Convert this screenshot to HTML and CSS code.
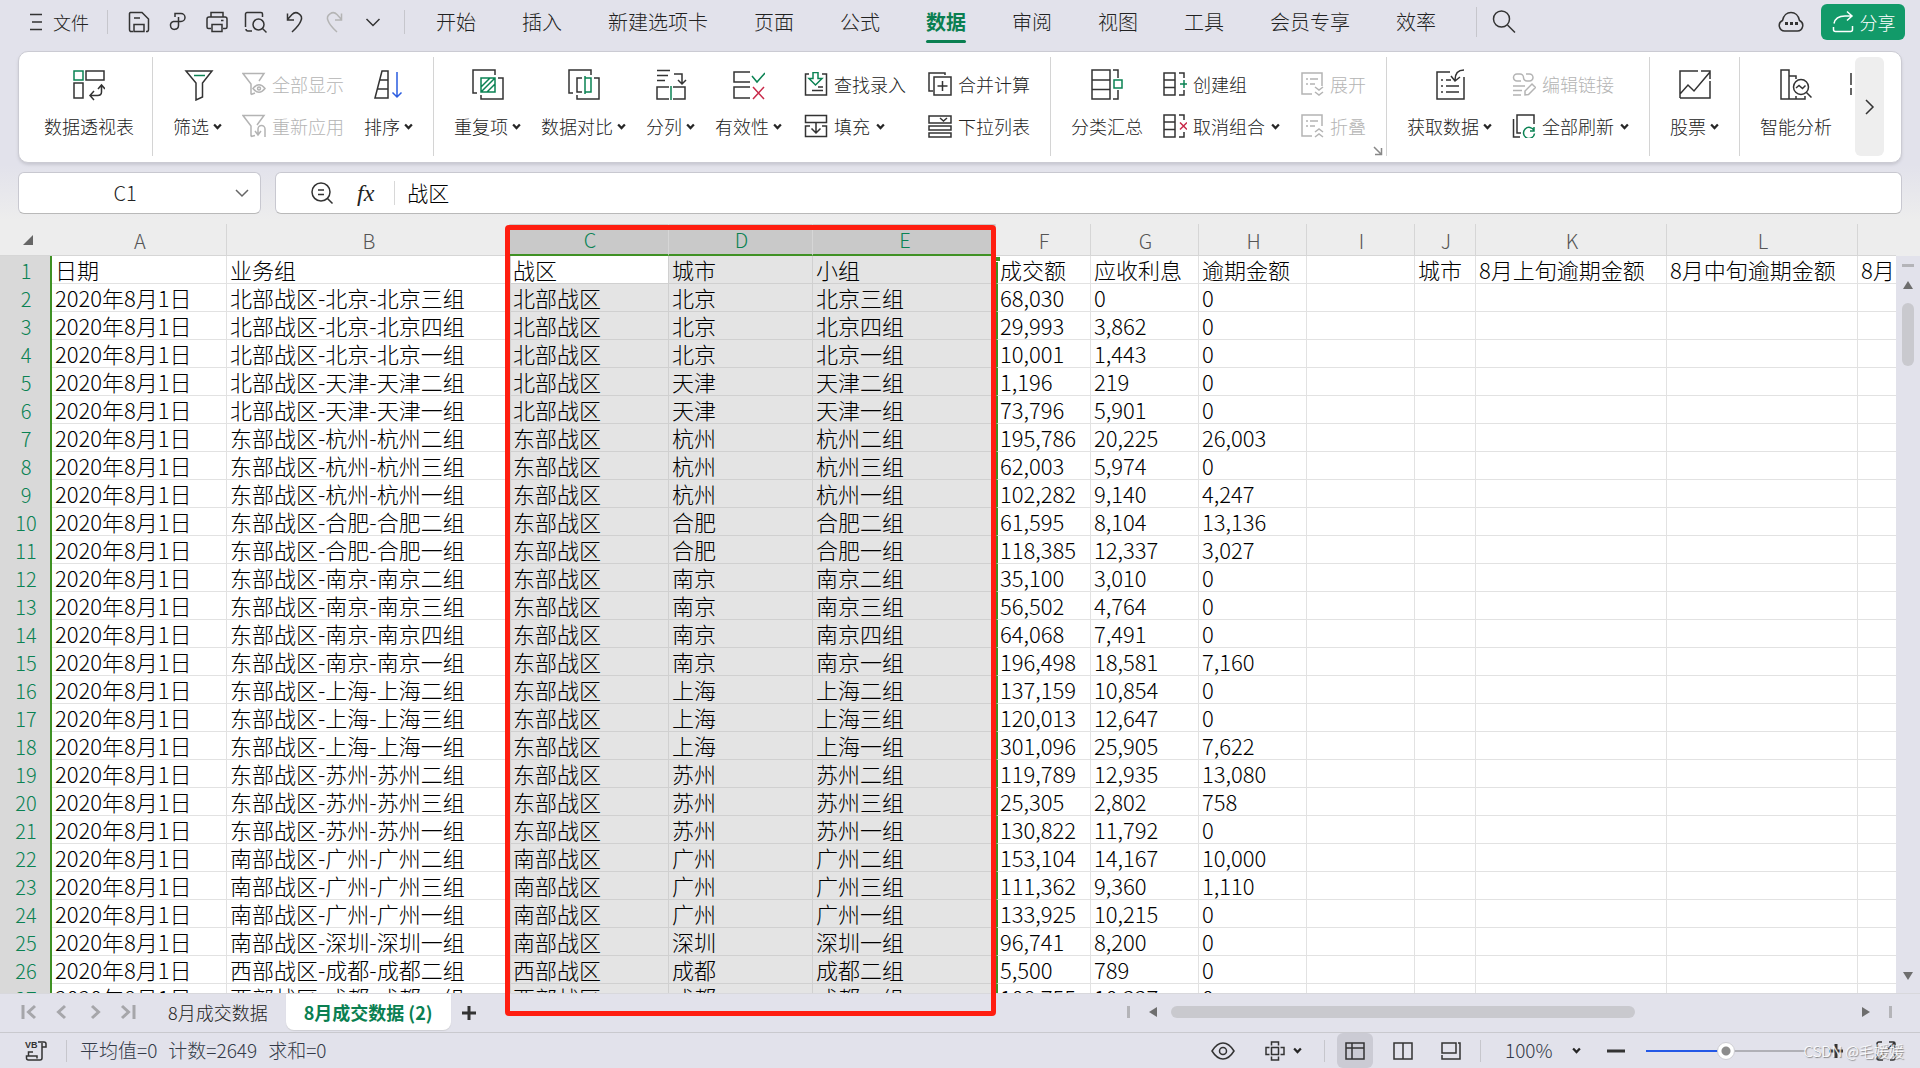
FILE: index.html
```html
<!DOCTYPE html>
<html lang="zh-CN">
<head>
<meta charset="utf-8">
<title>8月成交数据</title>
<link rel="stylesheet" href="styles.css">
</head>
<body>
<svg class="defs" width="0" height="0" aria-hidden="true">
  <symbol id="chev" viewBox="0 0 8 8"><path d="M1 2.200 4 5.400 7 2.200" fill="none" stroke="currentColor" stroke-width="2"/></symbol>
</svg>

<header class="menubar">
  <button class="file"><svg width="14" height="18" viewBox="0 0 14 18"><path d="M1 1.500h12M3 9h10M1 16.500h12"/></svg>文件</button>
  <span class="rule"></span>
  <div class="quick">
    <button aria-label="保存"><svg width="24" height="24" viewBox="0 0 24 24"><path d="M6 21.500H3.500a2 2 0 0 1-1-2V3.500a1.500 1.500 0 0 1 1-1H15L21.500 9v10.500a2 2 0 0 1-1 2H19M7 21.500v-7h10v7zM7 8h6"/></svg></button>
    <button aria-label="输出"><svg width="24" height="24" viewBox="0 0 24 24"><path d="M9 7V3.500h6a4 4 0 0 1 0 8H7.500a4 4 0 1 0 5 4V7"/></svg></button>
    <button aria-label="打印"><svg width="24" height="24" viewBox="0 0 24 24"><path d="M6 7V2.500h12V7M6 18.500H3.500a1.500 1.500 0 0 1-1.500-1.500V9a2 2 0 0 1 2-2h16a2 2 0 0 1 2 2v8a1.500 1.500 0 0 1-1.500 1.500H18M7 14.500h10v7H7zM16 10.500h2.500"/></svg></button>
    <button aria-label="打印预览"><svg width="24" height="24" viewBox="0 0 24 24"><path d="M8 21H4a2 2 0 0 1-2-2M1.500 17V4A1.500 1.500 0 0 1 3 2.500h14A1.500 1.500 0 0 1 18.500 4v3"/><circle cx="14.500" cy="14.500" r="5.500"/><path d="m18.500 18.500 4 4"/></svg></button>
    <button aria-label="撤销"><svg width="24" height="24" viewBox="0 0 24 24"><path d="M4.500 3.500v6.500H11M4.500 9.500 9 4.500a5.500 5.500 0 0 1 9 6c-1 3-4 7-9 11.500"/></svg></button>
    <button class="off" aria-label="恢复" disabled><svg width="24" height="24" viewBox="0 0 24 24"><path d="M19.500 3.500v6.500H13M19.500 9.500 15 4.500a5.500 5.500 0 0 0-9 6c1 3 4 7 9 11.500"/></svg></button>
    <button aria-label="更多"><svg width="24" height="24" viewBox="0 0 24 24"><path d="m5.500 9 6.500 6.500L18.500 9"/></svg></button>
  </div>
  <span class="rule"></span>
  <nav class="tabs">
    <button>开始</button><button>插入</button><button>新建选项卡</button><button>页面</button><button>公式</button><button class="on">数据</button><button>审阅</button><button>视图</button><button>工具</button><button>会员专享</button><button>效率</button>
  </nav>
  <span class="rule tall"></span>
  <button class="search" aria-label="搜索"><svg width="24" height="24" viewBox="0 0 24 24"><circle cx="9.500" cy="9" r="8"/><path d="m15.500 15 7.500 7.500"/></svg></button>
  <button class="cloud" aria-label="云同步"><svg width="26" height="22" viewBox="0 0 26 22"><path d="M7 20a5.500 5.500 0 0 1-2.500-10.500C5.500 4.500 9 1.500 13 1.500s7.500 3 8.500 8A5.500 5.500 0 0 1 19 20z"/><path class="ink" d="M7 11h3v3H7zM12 11h3v3h-3zM17 11h3v3h-3z"/></svg></button>
  <button class="share"><svg width="24" height="24" viewBox="0 0 24 24"><path d="M2.500 17v2.500a2 2 0 0 0 2 2h15a2 2 0 0 0 2-2V16M3 13.500C4 8.500 8 6 14 6h7M16 1.500 21 6l-5 4.500"/></svg>分享</button>
</header>

<section class="ribbon">
  <div class="groups">
    <div class="group first">
      <button class="big"><svg width="32" height="32" viewBox="0 0 32 32"><path class="g" d="M1 2h9v9H1z"/><path d="M13 2h18v9H13zM1 14h9v15H1zM28.500 16.500V23q0 3.500-4 3.500h-7M25 20l3.500-4 3.500 4M21 22l-4 4.500 4 4.500"/></svg><span>数据透视表</span></button>
    </div>
    <div class="group">
      <button class="big"><svg width="32" height="32" viewBox="0 0 32 32"><path d="M4 2h26L20.500 14v14L14 31V14z"/><path class="g" d="M12 6.500h11"/></svg><span>筛选<svg class="chev"><use href="#chev"/></svg></span></button>
      <div class="col">
        <button class="off" disabled><svg width="24" height="24" viewBox="0 0 24 24"><path d="M9 22.500V12L1 1.500h21L17 9M9 22.500l4-1.500M11 16.500q6-7.500 12 0-6 7.500-12 0z"/><circle cx="17" cy="16.500" r="1.500"/></svg><span>全部显示</span></button>
        <button class="off" disabled><svg width="24" height="24" viewBox="0 0 24 24"><path d="M9 22.500V12L1 1.500h21L15 11M9 22.500l4-1M13 17l3 4 3-4M16 21v-6a3.500 3.500 0 0 1 7 0v8"/></svg><span>重新应用</span></button>
      </div>
      <button class="big"><svg width="32" height="32" viewBox="0 0 32 32"><path d="m2 29 7-27h6v27zM7 11h8M4.500 20H15"/><path class="b" d="M24 3v25M19.500 23.500l4.500 4.500 4.500-4.500"/></svg><span>排序<svg class="chev"><use href="#chev"/></svg></span></button>
    </div>
    <div class="group wide">
      <button class="big"><svg width="32" height="32" viewBox="0 0 32 32"><path d="M5 24H1V1h22v5M9 26v4h22V9h-5"/><path class="g" d="M9 9h14v14H9zM9 18l9-9M9 23 23 9M15 23l8-8"/></svg><span>重复项<svg class="chev"><use href="#chev"/></svg></span></button>
      <button class="big"><svg width="32" height="32" viewBox="0 0 32 32"><path d="M5 24H1V1h22v5M9 26v4h22V9h-5M14 9H9v14h5"/><path class="g" d="M17 7v18M17 9h6v14h-6"/></svg><span>数据对比<svg class="chev"><use href="#chev"/></svg></span></button>
      <button class="big"><svg width="32" height="32" viewBox="0 0 32 32"><path d="M2 1.500h13M2 6.500h11M2 11.500h8M19 5h8v9M23 11l4 4 4-4M14 30H2V18h12M18 18h12v12H18"/><path class="g" d="M16 17v14"/></svg><span>分列<svg class="chev"><use href="#chev"/></svg></span></button>
      <button class="big"><svg width="32" height="32" viewBox="0 0 32 32"><path d="M17 3H1v10h16M17 18H1v11h16"/><path class="g" d="m19 7 5 6 8-9"/><path class="r" d="m20 18 11 12M31 18 20 30"/></svg><span>有效性<svg class="chev"><use href="#chev"/></svg></span></button>
      <div class="col">
        <button><svg width="24" height="24" viewBox="0 0 24 24"><path d="M5 2H1.500v21h21V2H18M8 18.500h11M14 15h5"/><path class="g" d="M9 .500h5v6h4l-6.500 6.500L5 6.500h4z"/></svg><span>查找录入</span></button>
        <button><svg width="24" height="24" viewBox="0 0 24 24"><path d="M1.500 1.500h21v7h-21zM6 12H1.500v10.500h21V12H18M12 9v10M7.500 14.500 12 19l4.500-4.500"/></svg><span>填充</span><svg class="chev"><use href="#chev"/></svg></button>
      </div>
      <div class="col">
        <button><svg width="24" height="24" viewBox="0 0 24 24"><path d="M5 19H1V1h16v2M6 5h17v18H6zM14.500 9v10M9.500 14h10"/></svg><span>合并计算</span></button>
        <button><svg width="24" height="24" viewBox="0 0 24 24"><path d="M1 2h22v7H1zM1 12h22v4H1zM1 19h22v4H1zM12 4l3.500 3L19 4"/></svg><span>下拉列表</span></button>
      </div>
    </div>
    <div class="group">
      <button class="big"><svg width="32" height="32" viewBox="0 0 32 32"><path d="M1 1h18v29H1zM1 11h18M1 20.500h18M22 1h5v8M22 30h5v-9"/><path class="g" d="M23 11h8v8h-8z"/></svg><span>分类汇总</span></button>
      <div class="col">
        <button><svg width="24" height="24" viewBox="0 0 24 24"><path d="M1 1h11v22H1zM1 8h11M1 15.500h11M16 1h5v5M16 23h5v-5"/><path class="g" d="M21 8v8M17 12h7"/></svg><span>创建组</span></button>
        <button><svg width="24" height="24" viewBox="0 0 24 24"><path d="M1 1h11v22H1zM1 8h11M1 15.500h11M16 1h5v5M16 23h5v-5"/><path class="r" d="m17 8.500 7 7M24 8.500l-7 7"/></svg><span>取消组合</span><svg class="chev"><use href="#chev"/></svg></button>
      </div>
      <div class="col">
        <button class="off" disabled><svg width="24" height="24" viewBox="0 0 24 24"><path d="M12 22H2V1h20v13M6 7h2M10 7h8M6 12h2M10 12h5M15 15l4 3 4-3M15 20l4 3 4-3"/></svg><span>展开</span></button>
        <button class="off" disabled><svg width="24" height="24" viewBox="0 0 24 24"><path d="M12 22H2V1h20v11M6 7h2M10 7h8M6 12h2M10 12h5M15 18l4-3 4 3M15 23l4-3 4 3"/></svg><span>折叠</span></button>
      </div>
      <button class="launch" aria-label="分级显示设置"><svg width="10" height="10" viewBox="0 0 10 10"><path d="m1 1 7 7M8.500 2v6.500H2"/></svg></button>
    </div>
    <div class="group">
      <button class="big"><svg width="32" height="32" viewBox="0 0 32 32"><path d="M16 3H3v27h27V8M7 11h2M12 11h5M7 17h2M12 17h13M7 23h2M12 23h13M30 1c-6 0-9 4-9 10M17 7l4 5 5-4"/></svg><span>获取数据<svg class="chev"><use href="#chev"/></svg></span></button>
      <div class="col">
        <button class="off" disabled><svg width="24" height="24" viewBox="0 0 24 24"><path d="M9 9H5a3.500 3.500 0 0 1 0-7h3a3.500 3.500 0 0 1 3.500 3.500M14 2h3.500a3.500 3.500 0 0 1 0 7H15a3.500 3.500 0 0 1-3.500-3.500M1 14h12M1 18.500h9M1 23h8M13 23v-4l7-7 3.500 3.500-7 7z"/></svg><span>编辑链接</span></button>
        <button><svg width="24" height="24" viewBox="0 0 24 24"><path d="M9 19H5V1h17v9M1.500 5v18H8"/><path class="g" d="M22 13v4h-4M22 16.500a5.500 5.500 0 1 0 .500 3"/></svg><span>全部刷新</span><svg class="chev"><use href="#chev"/></svg></button>
      </div>
    </div>
    <div class="group">
      <button class="big"><svg width="32" height="32" viewBox="0 0 32 32"><path d="M19 2H1v27M1 29h30V12M1 25l8-9 6 6L31 3M22 2h9v8"/></svg><span>股票<svg class="chev"><use href="#chev"/></svg></span></button>
    </div>
    <div class="group last">
      <button class="big"><svg width="32" height="32" viewBox="0 0 32 32"><path d="M1 1h8v29H1zM9 7h7v3M9 30h7v-3M16 30h9v-3"/><circle cx="21" cy="18" r="7.500"/><path d="m26.500 23.500 5 5M16 19l3-2.500 3.500 3 3-3"/></svg><span>智能分析</span></button>
      <svg class="cut" width="2" height="32" viewBox="0 0 2 32"><path d="M1 4v12M1 19v7"/></svg>
    </div>
  </div>
  <button class="more" aria-label="更多功能"><svg width="14" height="20" viewBox="0 0 14 20"><path d="m3 3 7 7-7 7"/></svg></button>
</section>

<section class="fbar">
  <div class="namebox">
    <input type="text" value="C1" aria-label="名称框">
    <svg width="14" height="10" viewBox="0 0 14 10"><path d="m1 2 6 6 6-6"/></svg>
  </div>
  <div class="formula">
    <button aria-label="浏览公式"><svg width="24" height="24" viewBox="0 0 24 24"><circle cx="11" cy="11" r="9"/><path d="m17.500 17.500 5 5M8 9h6M8 13.500h6"/></svg></button>
    <button class="fx">fx</button>
    <input type="text" value="战区" aria-label="编辑栏">
  </div>
</section>

<main class="workbook">
  <div class="sheet">
    <table>
      <colgroup><col class="w-n"><col class="w-a"><col class="w-b"><col class="w-c"><col class="w-d"><col class="w-e"><col class="w-f"><col class="w-g"><col class="w-g"><col class="w-g"><col class="w-j"><col class="w-k"><col class="w-k"><col></colgroup>
      <thead><tr><th class="corner"><svg width="12" height="12" viewBox="0 0 12 12"><path d="M11 1v10H1z"/></svg><th>A<th>B<th class="s">C<th class="s">D<th class="s">E<th>F<th>G<th>H<th>I<th>J<th>K<th>L<th></tr></thead>
      <tbody>
      <tr><th>1<td>日期<td>业务组<td class="active">战区<td>城市<td>小组<td>成交额<td>应收利息<td>逾期金额<td><td>城市<td>8月上旬逾期金额<td>8月中旬逾期金额<td>8月
      <tr><th>2<td>2020年8月1日<td>北部战区-北京-北京三组<td>北部战区<td>北京<td>北京三组<td>68,030<td>0<td>0<td><td><td><td><td>
      <tr><th>3<td>2020年8月1日<td>北部战区-北京-北京四组<td>北部战区<td>北京<td>北京四组<td>29,993<td>3,862<td>0<td><td><td><td><td>
      <tr><th>4<td>2020年8月1日<td>北部战区-北京-北京一组<td>北部战区<td>北京<td>北京一组<td>10,001<td>1,443<td>0<td><td><td><td><td>
      <tr><th>5<td>2020年8月1日<td>北部战区-天津-天津二组<td>北部战区<td>天津<td>天津二组<td>1,196<td>219<td>0<td><td><td><td><td>
      <tr><th>6<td>2020年8月1日<td>北部战区-天津-天津一组<td>北部战区<td>天津<td>天津一组<td>73,796<td>5,901<td>0<td><td><td><td><td>
      <tr><th>7<td>2020年8月1日<td>东部战区-杭州-杭州二组<td>东部战区<td>杭州<td>杭州二组<td>195,786<td>20,225<td>26,003<td><td><td><td><td>
      <tr><th>8<td>2020年8月1日<td>东部战区-杭州-杭州三组<td>东部战区<td>杭州<td>杭州三组<td>62,003<td>5,974<td>0<td><td><td><td><td>
      <tr><th>9<td>2020年8月1日<td>东部战区-杭州-杭州一组<td>东部战区<td>杭州<td>杭州一组<td>102,282<td>9,140<td>4,247<td><td><td><td><td>
      <tr><th>10<td>2020年8月1日<td>东部战区-合肥-合肥二组<td>东部战区<td>合肥<td>合肥二组<td>61,595<td>8,104<td>13,136<td><td><td><td><td>
      <tr><th>11<td>2020年8月1日<td>东部战区-合肥-合肥一组<td>东部战区<td>合肥<td>合肥一组<td>118,385<td>12,337<td>3,027<td><td><td><td><td>
      <tr><th>12<td>2020年8月1日<td>东部战区-南京-南京二组<td>东部战区<td>南京<td>南京二组<td>35,100<td>3,010<td>0<td><td><td><td><td>
      <tr><th>13<td>2020年8月1日<td>东部战区-南京-南京三组<td>东部战区<td>南京<td>南京三组<td>56,502<td>4,764<td>0<td><td><td><td><td>
      <tr><th>14<td>2020年8月1日<td>东部战区-南京-南京四组<td>东部战区<td>南京<td>南京四组<td>64,068<td>7,491<td>0<td><td><td><td><td>
      <tr><th>15<td>2020年8月1日<td>东部战区-南京-南京一组<td>东部战区<td>南京<td>南京一组<td>196,498<td>18,581<td>7,160<td><td><td><td><td>
      <tr><th>16<td>2020年8月1日<td>东部战区-上海-上海二组<td>东部战区<td>上海<td>上海二组<td>137,159<td>10,854<td>0<td><td><td><td><td>
      <tr><th>17<td>2020年8月1日<td>东部战区-上海-上海三组<td>东部战区<td>上海<td>上海三组<td>120,013<td>12,647<td>0<td><td><td><td><td>
      <tr><th>18<td>2020年8月1日<td>东部战区-上海-上海一组<td>东部战区<td>上海<td>上海一组<td>301,096<td>25,905<td>7,622<td><td><td><td><td>
      <tr><th>19<td>2020年8月1日<td>东部战区-苏州-苏州二组<td>东部战区<td>苏州<td>苏州二组<td>119,789<td>12,935<td>13,080<td><td><td><td><td>
      <tr><th>20<td>2020年8月1日<td>东部战区-苏州-苏州三组<td>东部战区<td>苏州<td>苏州三组<td>25,305<td>2,802<td>758<td><td><td><td><td>
      <tr><th>21<td>2020年8月1日<td>东部战区-苏州-苏州一组<td>东部战区<td>苏州<td>苏州一组<td>130,822<td>11,792<td>0<td><td><td><td><td>
      <tr><th>22<td>2020年8月1日<td>南部战区-广州-广州二组<td>南部战区<td>广州<td>广州二组<td>153,104<td>14,167<td>10,000<td><td><td><td><td>
      <tr><th>23<td>2020年8月1日<td>南部战区-广州-广州三组<td>南部战区<td>广州<td>广州三组<td>111,362<td>9,360<td>1,110<td><td><td><td><td>
      <tr><th>24<td>2020年8月1日<td>南部战区-广州-广州一组<td>南部战区<td>广州<td>广州一组<td>133,925<td>10,215<td>0<td><td><td><td><td>
      <tr><th>25<td>2020年8月1日<td>南部战区-深圳-深圳一组<td>南部战区<td>深圳<td>深圳一组<td>96,741<td>8,200<td>0<td><td><td><td><td>
      <tr><th>26<td>2020年8月1日<td>西部战区-成都-成都二组<td>西部战区<td>成都<td>成都二组<td>5,500<td>789<td>0<td><td><td><td><td>
      <tr><th>27<td>2020年8月1日<td>西部战区-成都-成都一组<td>西部战区<td>成都<td>成都一组<td>108,755<td>10,337<td>0<td><td><td><td><td>
      </tbody>
    </table>
    <span class="handle"></span>
  </div>
  <div class="vscroll">
    <span class="split"></span>
    <svg width="12" height="10" viewBox="0 0 12 10"><path d="M6 1l5 8H1z"/></svg>
    <span class="thumb"></span>
    <svg class="down" width="12" height="10" viewBox="0 0 12 10"><path d="M6 9 1 1h10z"/></svg>
  </div>
  <div class="frame"></div>
</main>

<section class="sheetbar">
  <div class="pager">
    <button aria-label="第一张"><svg width="16" height="16" viewBox="0 0 16 16"><path d="M2 1v14M14 2 7.500 8l6.500 6"/></svg></button>
    <button aria-label="上一张"><svg width="16" height="16" viewBox="0 0 16 16"><path d="M11 2 4.500 8l6.500 6"/></svg></button>
    <button aria-label="下一张"><svg width="16" height="16" viewBox="0 0 16 16"><path d="m5 2 6.500 6L5 14"/></svg></button>
    <button aria-label="最后一张"><svg width="16" height="16" viewBox="0 0 16 16"><path d="M14 1v14M2 2l6.500 6L2 14"/></svg></button>
  </div>
  <button class="tab">8月成交数据</button>
  <button class="tab on">8月成交数据 (2)</button>
  <button class="add" aria-label="新建工作表"><svg width="16" height="16" viewBox="0 0 16 16"><path d="M8 1v14M1 8h14"/></svg></button>
  <div class="hscroll">
    <span class="bar"></span>
    <svg width="10" height="12" viewBox="0 0 10 12"><path d="M1 6l8-5v10z"/></svg>
    <div class="track"><span class="thumb"></span></div>
    <svg width="10" height="12" viewBox="0 0 10 12"><path d="M9 6 1 1v10z"/></svg>
    <span class="bar"></span>
  </div>
</section>

<footer class="status">
  <button class="vba" aria-label="宏编辑器"><svg width="24" height="24" viewBox="0 0 24 24"><text x="1" y="9">VB</text><path d="M14 3h6a2 2 0 0 1 2 2v3h-4M18 4v15a2 2 0 0 1-2 2H4.500a2 2 0 0 1-2-2v-2H13v2.500M4.500 17v-4H9"/></svg></button>
  <span class="rule"></span>
  <p class="sums"><span>平均值=0</span><span>计数=2649</span><span>求和=0</span></p>
  <div class="tools">
    <button class="sq" aria-label="护眼模式"><svg width="24" height="24" viewBox="0 0 24 24"><path d="M1 12Q6 4 12 4t11 8q-5 8-11 8T1 12z"/><circle cx="12" cy="12" r="3.500"/></svg></button>
    <button class="cross" aria-label="阅读模式"><svg width="20" height="20" viewBox="0 0 20 20"><path d="M6.500 4.500V1h7v3.500M6.500 15.500V19h7v-3.500M4.500 6.500H1v7h3.500M15.500 6.500H19v7h-3.500M6.500 6.500h7v7h-7z"/></svg><svg class="chev"><use href="#chev"/></svg></button>
    <span class="rule"></span>
    <button class="sq on" aria-label="普通视图"><svg width="20" height="20" viewBox="0 0 20 20"><path d="M1 2h18v16H1zM1 7h18M7 2v16"/></svg></button>
    <button class="sq" aria-label="分页预览"><svg width="20" height="20" viewBox="0 0 20 20"><path d="M1 2h18v16H1zM10 2v16"/></svg></button>
    <button class="sq" aria-label="页面布局"><svg width="20" height="20" viewBox="0 0 20 20"><path d="M1 2h14v10H1zM1 14v4h18V2h-2"/></svg></button>
    <span class="rule"></span>
    <div class="zoom"><select aria-label="显示比例"><option>100%</option></select><svg class="chev"><use href="#chev"/></svg></div>
    <button aria-label="缩小"><svg class="bold" width="20" height="20" viewBox="0 0 20 20"><path d="M1 10h18"/></svg></button>
    <input type="range" min="0" max="100" value="50" aria-label="缩放">
    <button aria-label="放大"><svg class="bold" width="20" height="20" viewBox="0 0 20 20"><path d="M3 10h14M10 3v14"/></svg></button>
    <button class="full" aria-label="全屏"><svg width="20" height="20" viewBox="0 0 20 20"><path d="M1 7V3a2 2 0 0 1 2-2h3M13 1h4.500A1.500 1.500 0 0 1 19 2.500V7M19 13v4a2 2 0 0 1-2 2h-3M7 19H3a2 2 0 0 1-2-2v-4M18 2l-6 6M2 18l6-6"/></svg></button>
  </div>
  <span class="mark">CSDN @毛媛媛</span>
</footer>
</body>
</html>
```
FILE: styles.css
```css
* { box-sizing: border-box; }

body {
  margin: 0;
  height: 100vh;
  display: flex;
  flex-direction: column;
  overflow: hidden;
  background: linear-gradient(#e2e2eb 0, #e2e2eb 165px, #ededed 220px);
  color: #222;
  font: 300 18px/24px "Noto Sans CJK SC", sans-serif;
}

button, input, select {
  margin: 0;
  padding: 0;
  border: 0;
  background: none;
  color: inherit;
  font: inherit;
  outline: 0;
}

button {
  display: flex;
  align-items: center;
  justify-content: center;
  white-space: nowrap;
}

svg {
  display: block;
  flex: none;
  fill: none;
  stroke: #333;
  stroke-width: 1.5;
}

.defs { position: absolute; }
.chev { width: 9px; height: 9px; stroke: none; color: #262626; }
.g { stroke: #0a8253; }
.b { stroke: #2a5ce0; }
.r { stroke: #c82848; }
.ink { fill: #333; stroke: none; }
.off { color: #b4b4b4; }
.off svg { stroke: #b4b4b4; }
.rule { width: 1px; height: 24px; background: #c6c6cc; }

/* Menu bar */
.menubar { flex: none; height: 51px; display: flex; align-items: center; padding: 0 15px 7px 29px; }
.file { gap: 10px; margin-right: 18px; }
.quick { display: flex; gap: 15px; margin: 0 19px; }
.tabs { display: flex; gap: 46px; margin: 0 40px 0 31px; align-self: stretch; }
.tabs button { font-size: 20px; height: 43px; position: relative; }
.tabs .on { color: #0a7f51; font-weight: 700; }
.tabs .on::after { content: ""; position: absolute; left: 0; right: 0; bottom: 0; height: 3px; border-radius: 2px; background: #0a7f51; }
.rule.tall { height: 30px; }
.search { margin-left: 15px; }
.cloud { margin-left: auto; }
.share { width: 84px; height: 36px; margin-left: 17px; gap: 5px; border-radius: 6px; background: #129a69; color: #fff; }
.share svg { stroke: #fff; }

/* Ribbon */
.ribbon {
  flex: none;
  display: flex;
  margin: 0 18px;
  padding: 5px 17px 6px 0;
  border: 1px solid #cbcbd3;
  border-radius: 10px;
  background: #fff;
  box-shadow: 0 2px 3px #c9c9d2;
}
.groups { flex: 1; min-width: 0; display: flex; overflow: hidden; height: 99px; }
.group { flex: none; display: flex; align-items: flex-start; gap: 20px; padding: 0 20px; border-right: 1px solid #d4d4d4; position: relative; }
.group.first { padding-left: 25px; padding-right: 18px; }
.group.last { border: 0; padding-right: 0; gap: 18px; }
.group.wide .col { margin-left: 2px; }
.big { flex-direction: column; gap: 13px; padding-top: 12px; }
.big span { display: flex; align-items: center; gap: 4px; }
.col { display: flex; flex-direction: column; align-items: flex-start; gap: 18px; padding-top: 15px; }
.col button { gap: 6px; }
.cut { margin-top: 12px; }
.launch { position: absolute; right: 3px; bottom: 0; }
.launch svg { stroke: #888; }
.more { width: 29px; border-radius: 6px; background: #eee; }

/* Formula bar */
.fbar { flex: none; display: flex; gap: 14px; margin: 9px 18px 0; height: 42px; }
.namebox, .formula { display: flex; align-items: center; border: 1px solid #c8c8d0; border-bottom-color: #b9b9b9; border-radius: 6px; background: #fff; }
.namebox { width: 243px; padding-right: 11px; }
.namebox input { flex: 1; min-width: 0; padding-right: 4px; text-align: center; font-size: 20px; }
.namebox svg { stroke: #666; }
.formula { flex: 1; padding-left: 34px; }
.fx { font: italic 24px/28px "Liberation Serif", serif; margin: 0 20px 0 23px; }
.formula input { flex: 1; height: 24px; border-left: 1px solid #d8d8d8; padding-left: 12px; padding-bottom: 3px; font-size: 21px; color: #000; }

/* Grid */
.workbook { flex: 1; min-height: 0; display: flex; position: relative; margin-top: 10px; }
.sheet { flex: 1; min-width: 0; overflow: hidden; position: relative; background: #fff; }
table { width: 100%; table-layout: fixed; border-collapse: separate; border-spacing: 0; }
.w-n { width: 52px; } .w-a { width: 175px; } .w-b { width: 283px; } .w-c { width: 159px; }
.w-d { width: 144px; } .w-e { width: 183px; } .w-f { width: 95px; } .w-g { width: 108px; }
.w-j { width: 61px; } .w-k { width: 191px; }
th, td { height: 28px; padding: 0 0 1px 3px; border: 0 solid #e2e2e2; border-width: 0 1px 1px 0; white-space: nowrap; line-height: 26px; text-align: left; }
td { font-size: 22px; color: #000; }
td:last-child { border-right: 0; }
th { font-weight: 300; font-size: 20px; text-align: center; padding: 1px 0 0 2px; }
thead th { height: 32px; padding-top: 2px; background: #ededed; color: #555; border-color: #d6d6d6; }
thead th:last-child { border-right: 0; }
thead .s { background: #c9c9c9; color: #0a8253; border-bottom: 2px solid #3f9124; }
thead .corner { border-right: 0; padding: 0 0 0 22px; }
.corner svg { fill: #666; stroke: none; }
tbody th { background: #d9d9d9; color: #0a8253; border-right: 2px solid #3f9124; border-bottom: 0; }
tbody td:nth-child(n+4):nth-child(-n+6) { background: #e4e4e4; border-color: #d0d0d0; }
tbody td:nth-child(4) { border-left: 1px solid #3f9124; padding-left: 2px; }
tbody td:nth-child(7) { border-left: 2px solid #3f9124; padding-left: 2px; }
tbody td.active:nth-child(4) { background: #fff; }
.handle { position: absolute; left: 995px; top: 32px; width: 5px; height: 6px; background: #3f9124; border: 1px solid #fff; border-width: 1px 0; }

.frame { position: absolute; left: 505px; top: 1px; width: 491px; bottom: -23px; border: 5px solid #ff1e10; border-radius: 4px; z-index: 1; }

.vscroll { width: 24px; border-top: 32px solid #ededed; background: #e2e2eb; display: flex; flex-direction: column; align-items: center; padding: 8px 0 12px; }
.vscroll svg, .hscroll svg { fill: #6e6e6e; stroke: none; }
.vscroll .split { width: 12px; height: 3px; background: #b4b4b8; margin-bottom: 13px; }
.vscroll .thumb { width: 12px; height: 63px; margin-top: 13px; border-radius: 6px; background: #c9c9ce; }
.vscroll .down { margin-top: auto; }

/* Sheet tabs */
.sheetbar { flex: none; height: 39px; display: flex; align-items: flex-start; background: #e2e2eb; border-top: 1px solid #d8d8dc; padding: 0 28px 0 21px; }
.pager { display: flex; gap: 17px; height: 36px; margin-right: 14px; }
.pager svg { stroke: #a6a6aa; stroke-width: 3; }
.tab { height: 36px; padding: 0 18px; }
.tab.on { border-radius: 0 0 8px 8px; background: #fff; color: #0a7f51; font-weight: 700; box-shadow: 0 1px 1px #cfcfd4; }
.add { height: 38px; margin-left: 10px; }
.add svg { stroke-width: 3; }
.hscroll { width: 765px; margin-left: auto; height: 36px; display: flex; align-items: center; }
.hscroll .bar { width: 3px; height: 12px; background: #b4b4b8; }
.hscroll svg { margin: 0 18px; }
.hscroll .bar + svg { margin-right: 13px; }
.track { flex: 1; }
.hscroll .thumb { display: block; width: 69%; height: 12px; border-radius: 6px; background: #c9c9ce; }

/* Status bar */
.status { flex: none; height: 36px; display: flex; align-items: center; background: #e2e2eb; border-top: 1px solid #c9c9ce; padding: 0 24px; position: relative; }
.status .rule { height: 22px; }
.vba { margin-right: 18px; }
.vba text { font: 700 9px "Liberation Sans", sans-serif; fill: #333; stroke: none; }
.sums { display: flex; gap: 11px; margin: 0 0 0 13px; padding-bottom: 2px; font-size: 19px; color: #333a48; }
.tools { margin-left: auto; display: flex; align-items: center; }
.tools .sq { width: 36px; height: 35px; margin-left: 12px; border-radius: 6px; }
.tools .on { background: #cbcbd4; }
.cross { gap: 8px; margin: 0 22px 0 24px; }
.tools .rule + .sq { margin-left: 12px; }
.sq + .rule { margin-left: 11px; }
.zoom { position: relative; display: flex; align-items: center; margin: 0 25px 0 24px; }
.zoom select { appearance: none; width: 76px; height: 28px; padding-bottom: 2px; font-size: 19px; color: #333a48; }
.zoom .chev { position: absolute; right: 0; pointer-events: none; }
.bold { stroke-width: 3; }
.tools input { appearance: none; width: 160px; height: 20px; margin: 0 20px; background: linear-gradient(90deg, #2458e6 50%, #b0b0b6 50%) center / 100% 2px no-repeat; }
.tools input::-webkit-slider-thumb { appearance: none; width: 18px; height: 18px; border-radius: 50%; border: 1px solid #cfcfd4; background: radial-gradient(circle, #8c8c8c 4px, #fff 5px); }
.full { margin-left: 30px; }
.mark { position: absolute; right: 16px; bottom: 5px; font-size: 15px; line-height: 24px; color: #fff; text-shadow: 1px 1px 1px #777; }
```
